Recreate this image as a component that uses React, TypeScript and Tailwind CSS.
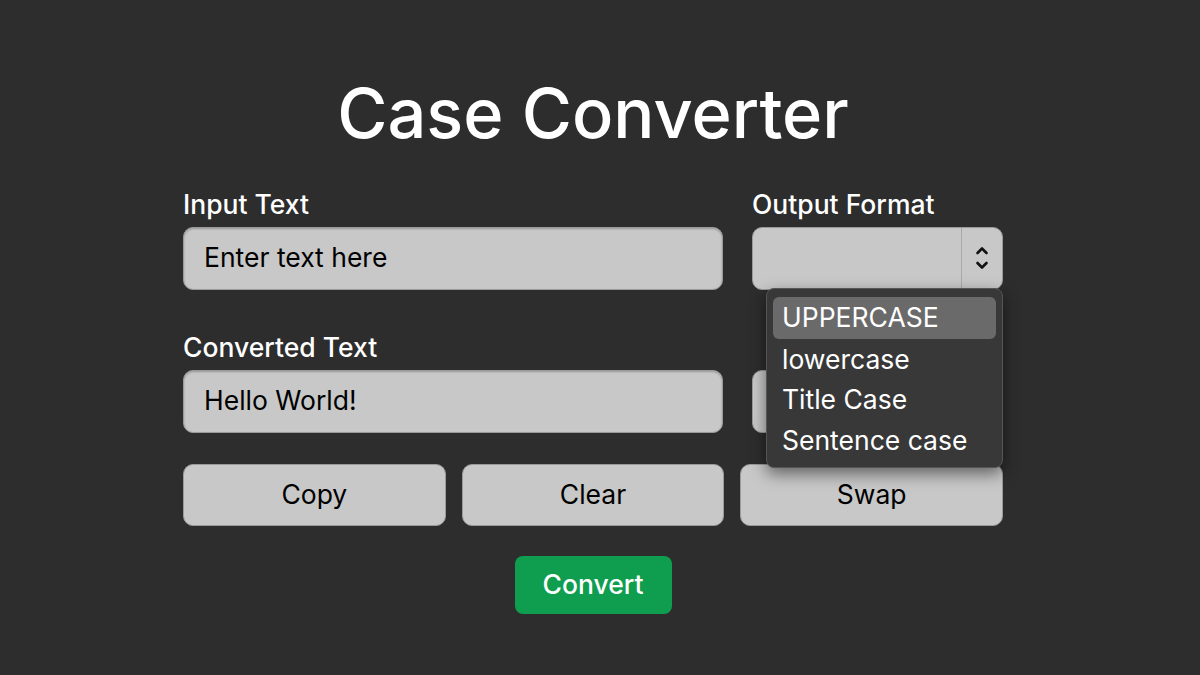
import React from 'react';

const fieldClass =
  'h-[63px] w-full rounded-[10px] bg-[#c8c8c8] border border-[#9a9a9a] px-5 text-[26.5px] text-black shadow-[inset_0_1px_2px_rgba(0,0,0,0.25)]';

const labelClass = 'block text-[26.5px] font-medium leading-[30px]';

const App: React.FC = () => {
  const options = ['UPPERCASE', 'lowercase', 'Title Case', 'Sentence case'];

  return (
    <div
      className="min-h-[675px] w-full bg-[#2d2d2d] text-white"
      style={{ fontFamily: 'Inter, "Noto Sans", sans-serif' }}
    >
      <div className="ml-[183px] w-[820px] pt-[80px]">
        <h1 className="text-center text-[68.5px] font-medium leading-none">Case Converter</h1>

        {/* Input row */}
        <div className="mt-[40px] grid grid-cols-[540px_1fr] gap-x-[29px]">
          <div>
            <label className={labelClass}>Input Text</label>
            <div className={`mt-[8px] flex items-center ${fieldClass}`}>Enter text here</div>
          </div>
          <div>
            <label className={labelClass}>Output Format</label>
            <div className="relative mt-[8px]">
              <div className="flex h-[63px] w-full overflow-hidden rounded-[10px] border border-[#9a9a9a] bg-[#c8c8c8]">
                <div className="flex-1" />
                <div className="flex w-[41px] flex-col items-center justify-center border-l border-[#a8a8a8]">
                  <svg width="14" height="30" viewBox="0 0 14 30" fill="none">
                    <path d="M2.5 10 L7 5.5 L11.5 10" stroke="#111" strokeWidth="2.6" strokeLinecap="round" strokeLinejoin="round" />
                    <path d="M2.5 20 L7 24.5 L11.5 20" stroke="#111" strokeWidth="2.6" strokeLinecap="round" strokeLinejoin="round" />
                  </svg>
                </div>
              </div>

              {/* open dropdown */}
              <div className="absolute left-[14px] right-0 top-[61px] z-10 rounded-[8px] border border-[#555] bg-[#383838] px-[6px] pb-[7px] pt-[8px] shadow-[0_6px_16px_rgba(0,0,0,0.5)]">
                {options.map((opt, i) => (
                  <div
                    key={opt}
                    className={`flex items-center rounded-[6px] px-[9px] text-[26.5px] leading-none text-white ${
                      i === 0 ? 'h-[42px] bg-[#6a6a6a]' : 'h-[40.5px]'
                    }`}
                  >
                    {opt}
                  </div>
                ))}
              </div>
            </div>
          </div>
        </div>

        {/* Converted row */}
        <div className="mt-[42px] grid grid-cols-[540px_1fr] gap-x-[29px]">
          <div>
            <label className={labelClass}>Converted Text</label>
            <div className={`mt-[8px] flex items-center ${fieldClass}`}>Hello World!</div>
          </div>
          <div className="pt-[38px]">
            <div className="h-[63px] w-full rounded-[10px] border border-[#9a9a9a] bg-[#c8c8c8]" />
          </div>
        </div>

        {/* Action buttons */}
        <div className="mt-[31px] grid grid-cols-3 gap-x-4">
          {['Copy', 'Clear', 'Swap'].map((b) => (
            <button
              key={b}
              className="h-[62px] rounded-[10px] border border-[#9a9a9a] bg-[#c8c8c8] text-[26.5px] text-black"
            >
              {b}
            </button>
          ))}
        </div>

        <div className="mt-[30px] flex justify-center">
          <button className="h-[58px] w-[157px] rounded-[8px] bg-[#0f9d4f] text-[26.5px] font-medium text-white">
            Convert
          </button>
        </div>
      </div>
    </div>
  );
};

export default App;
